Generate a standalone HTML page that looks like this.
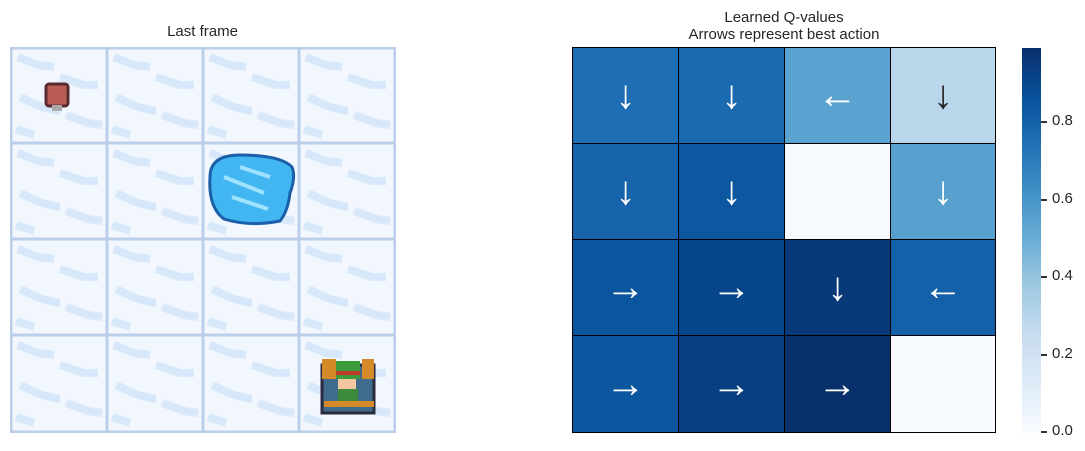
<!DOCTYPE html>
<html><head><style>
body{margin:0;width:1085px;height:451px;background:#fff;font-family:"Liberation Sans",sans-serif;color:#262626;position:relative;overflow:hidden}
.t{position:absolute;font-size:15px;text-align:center}
.c{position:absolute;display:flex;align-items:center;justify-content:center;font-size:40px;color:#fff;box-sizing:border-box;border:0.5px solid #000}
.tk{position:absolute;left:1041px;width:6px;height:1.5px;background:#333}
.tl{position:absolute;left:1052px;font-size:15px}
</style></head><body>
<div class="t" style="left:10px;width:385px;top:23px">Last frame</div>
<svg style="position:absolute;left:10px;top:47px" width="386" height="386" viewBox="0 0 386 386">
<defs><pattern id="ice" width="96" height="96" patternUnits="userSpaceOnUse">
<rect width="96" height="96" fill="#f1f7fd"/>
<path d="M8 10 l20 8 l16 2 M50 30 l24 8 l14 0 M10 50 l22 10 l18 4 M56 68 l22 8 l14 2 M6 82 l18 6" stroke="#d6e8f9" stroke-width="8" fill="none"/>
</pattern></defs>
<rect width="386" height="386" fill="url(#ice)"/>
<g stroke="#bccfea" stroke-width="3">
<path d="M1 0V386M97 0V386M193 0V386M289 0V386M385 0V386M0 1H386M0 96H386M0 192H386M0 288H386M0 385H386"/>
</g>
<rect x="36" y="37" width="22" height="22" rx="3" fill="#b95d55" stroke="#5a2a33" stroke-width="3"/>
<rect x="42" y="58" width="10" height="6" fill="#aaa"/>
<path d="M200 130 q0 -22 30 -22 q40 0 52 12 q4 10 -2 26 q-2 18 -10 28 q-30 6 -56 -2 q-16 -12 -14 -42z" fill="#42b6f0" stroke="#1a5fa8" stroke-width="3"/>
<path d="M214 130 l40 16 M222 150 l36 12 M230 120 l30 10" stroke="#9fe2ff" stroke-width="4"/>
<rect x="312" y="318" width="52" height="48" fill="#3f6c8c" stroke="#2a2a40" stroke-width="3"/>
<rect x="312" y="312" width="14" height="20" fill="#d58a2a"/>
<rect x="352" y="312" width="12" height="20" fill="#d58a2a"/>
<rect x="326" y="314" width="24" height="18" fill="#3e9b3c"/>
<rect x="328" y="332" width="18" height="10" fill="#f3c7a0"/>
<rect x="326" y="324" width="24" height="4" fill="#c0392b"/>
<rect x="328" y="342" width="20" height="14" fill="#3e8a3c"/>
<rect x="314" y="354" width="50" height="6" fill="#d58a2a"/>
</svg>
<div class="t" style="left:572px;width:424px;top:9px;line-height:17px">Learned Q-values<br>Arrows represent best action</div>
<div class="c" style="left:572px;top:47px;width:107px;height:97px;background:#1f6eb3">↓</div>
<div class="c" style="left:678px;top:47px;width:107px;height:97px;background:#1b69af">↓</div>
<div class="c" style="left:784px;top:47px;width:107px;height:97px;background:#5ba3d0">←</div>
<div class="c" style="left:890px;top:47px;width:106px;height:97px;background:#bad6eb;color:#262626">↓</div>
<div class="c" style="left:572px;top:143px;width:107px;height:97px;background:#1764ab">↓</div>
<div class="c" style="left:678px;top:143px;width:107px;height:97px;background:#0d57a1">↓</div>
<div class="c" style="left:784px;top:143px;width:107px;height:97px;background:#f7fbff"></div>
<div class="c" style="left:890px;top:143px;width:106px;height:97px;background:#58a1cf">↓</div>
<div class="c" style="left:572px;top:239px;width:107px;height:97px;background:#0b559f">→</div>
<div class="c" style="left:678px;top:239px;width:107px;height:97px;background:#08468b">→</div>
<div class="c" style="left:784px;top:239px;width:107px;height:97px;background:#083a7a">↓</div>
<div class="c" style="left:890px;top:239px;width:106px;height:97px;background:#1561a9">←</div>
<div class="c" style="left:572px;top:335px;width:107px;height:98px;background:#0c56a0">→</div>
<div class="c" style="left:678px;top:335px;width:107px;height:98px;background:#083f80">→</div>
<div class="c" style="left:784px;top:335px;width:107px;height:98px;background:#08306b">→</div>
<div class="c" style="left:890px;top:335px;width:106px;height:98px;background:#f7fbff"></div>
<div style="position:absolute;left:1022px;top:48px;width:19px;height:385px;background:linear-gradient(to top,#f7fbff 0%,#deebf7 13%,#c6dbef 26%,#9ecae1 38%,#6baed6 50%,#4292c6 62%,#2171b5 75%,#08519c 87%,#08306b 100%)"></div>
<div class="tk" style="top:121px"></div><div class="tl" style="top:112px">0.8</div>
<div class="tk" style="top:199px"></div><div class="tl" style="top:190px">0.6</div>
<div class="tk" style="top:276px"></div><div class="tl" style="top:267px">0.4</div>
<div class="tk" style="top:354px"></div><div class="tl" style="top:345px">0.2</div>
<div class="tk" style="top:431px"></div><div class="tl" style="top:422px">0.0</div>
</body></html>
